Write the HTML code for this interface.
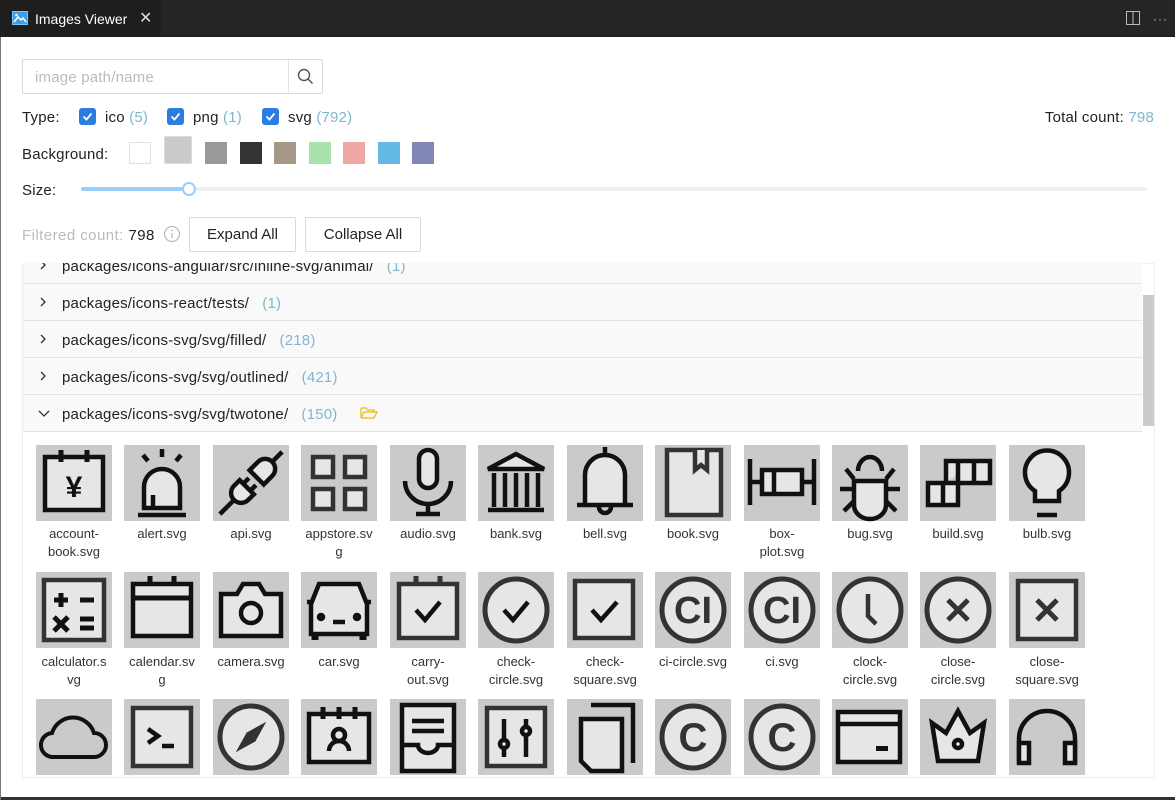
<!DOCTYPE html>
<html><head><meta charset="utf-8"><style>
*{box-sizing:border-box;margin:0;padding:0}
body{width:1175px;height:800px;overflow:hidden;background:#fff;font-family:"Liberation Sans",sans-serif;color:#222;position:relative}
.a{position:absolute}
.top{left:0;top:0;width:1175px;height:37px;background:#252526;border-bottom:1px solid #1a1a1a}
.tab{left:0;top:0;width:161px;height:37px;background:#1e1e1e;color:#fff;font-size:14px}
.t{font-size:15px;white-space:nowrap;letter-spacing:0.2px}
.cb{width:17px;height:17px;background:#2b7de1;border-radius:3px}
.blue{color:#7fb6d0}
.sw{width:22px;height:22px;top:142px}
.btn{border:1px solid #d9d9d9;border-radius:2px;height:35px;top:217px;font-size:15px;text-align:center;line-height:33px;background:#fff;z-index:5}
.row{left:23px;width:1119px;height:37px;background:#f9f9f9;border-bottom:1px solid #e3e3e3}
.row span.p{position:absolute;left:39px;top:11px;font-size:15px;letter-spacing:0.2px}
.chev{position:absolute;left:15px;top:13px}
.lbl{width:88px;font-size:13px;text-align:center;line-height:17.5px;color:#333;word-break:break-all}
svg{display:block}
</style></head><body>
<div class="a top"></div>
<div class="a tab">
<svg class="a" style="left:12px;top:11px" width="16" height="14" viewBox="0 0 16 14"><rect x="0.5" y="0.5" width="15" height="13" fill="#3a9fe8" stroke="#7cc4f5"/><path d="M2 11 L6 6 L9 9 L11 7 L14 11" stroke="#fff" stroke-width="1.5" fill="none"/><circle cx="4.5" cy="4" r="1.3" fill="#fff"/></svg>
<span class="a" style="left:35px;top:11px">Images Viewer</span>
<span class="a" style="left:139px;top:8px;font-size:16px;color:#ddd">✕</span>
</div>
<svg class="a" style="left:1126px;top:11px" width="14" height="14"><rect x="0.5" y="0.5" width="13" height="13" fill="none" stroke="#bbb"/><line x1="7" y1="0" x2="7" y2="14" stroke="#bbb"/></svg>
<div class="a" style="left:1153px;top:12px;color:#bbb;font-size:12px;letter-spacing:1px">···</div>
<div class="a" style="left:0;top:37px;width:1px;height:763px;background:#777;z-index:6"></div>
<div class="a" style="left:0;top:797px;width:1175px;height:3px;background:#333"></div>

<div class="a" style="left:22px;top:59px;width:301px;height:35px;border:1px solid #d9d9d9;border-radius:2px"></div>
<div class="a" style="left:288px;top:60px;width:1px;height:33px;background:#e3e3e3"></div>
<div class="a t" style="left:35px;top:69px;color:#bbb">image path/name</div>
<svg class="a" style="left:297px;top:68px" width="17" height="17"><circle cx="7" cy="7" r="5.5" fill="none" stroke="#555" stroke-width="1.4"/><line x1="11" y1="11" x2="15.5" y2="15.5" stroke="#555" stroke-width="1.5"/></svg>

<div class="a t" style="left:22px;top:109px">Type:</div>
<div class="a cb" style="left:79px;top:108px"></div><svg class="a" style="left:79px;top:108px" width="17" height="17"><path d="M4.5 8.5 L7.5 11.5 L12.5 5.5" stroke="#fff" stroke-width="1.8" fill="none"/></svg>
<div class="a t" style="left:105px;top:109px">ico <span class="blue">(5)</span></div>
<div class="a cb" style="left:167px;top:108px"></div><svg class="a" style="left:167px;top:108px" width="17" height="17"><path d="M4.5 8.5 L7.5 11.5 L12.5 5.5" stroke="#fff" stroke-width="1.8" fill="none"/></svg>
<div class="a t" style="left:193px;top:109px">png <span class="blue">(1)</span></div>
<div class="a cb" style="left:262px;top:108px"></div><svg class="a" style="left:262px;top:108px" width="17" height="17"><path d="M4.5 8.5 L7.5 11.5 L12.5 5.5" stroke="#fff" stroke-width="1.8" fill="none"/></svg>
<div class="a t" style="left:288px;top:109px">svg <span class="blue">(792)</span></div>
<div class="a t" style="right:21px;top:109px">Total count: <span class="blue">798</span></div>

<div class="a t" style="left:22px;top:146px">Background:</div>
<div class="a sw" style="left:129px;border:1px solid #e0e0e0;background:#fff"></div>
<div class="a" style="left:164px;top:136px;width:28px;height:28px;background:#cacaca;border:1px solid #ddd"></div>
<div class="a sw" style="left:205px;background:#999"></div>
<div class="a sw" style="left:240px;background:#333"></div>
<div class="a sw" style="left:274px;background:#a69887"></div>
<div class="a sw" style="left:309px;background:#a8e2ac"></div>
<div class="a sw" style="left:343px;background:#f0a6a2"></div>
<div class="a sw" style="left:378px;background:#62b9e1"></div>
<div class="a sw" style="left:412px;background:#8387b6"></div>

<div class="a t" style="left:22px;top:182px">Size:</div>
<div class="a" style="left:81px;top:187px;width:1066px;height:4px;background:#f0f0f0;border-radius:2px"></div>
<div class="a" style="left:81px;top:187px;width:108px;height:4px;background:#99cefa;border-radius:2px"></div>
<div class="a" style="left:182px;top:182px;width:14px;height:14px;border-radius:50%;background:#fff;border:2px solid #99cefa"></div>

<div class="a" style="left:22px;top:263px;width:1133px;height:515px;border:1px solid #eee;border-top:1px solid #f2f2f2"></div>
<div class="a" style="left:1143px;top:295px;width:11px;height:131px;background:#cbcbcb"></div>
<div class="a row" style="top:247px;height:37px"><svg class="chev" width="10" height="10"><path d="M3 1L7 5L3 9" fill="none" stroke="#333" stroke-width="1.3"/></svg><span class="p">packages/icons-angular/src/inline-svg/animal/ &nbsp; <span class="blue">(1)</span></span></div>
<div class="a" style="left:1px;top:244px;width:1174px;height:19px;background:#fff"></div>
<div class="a row" style="top:284px"><svg class="chev" width="10" height="10"><path d="M3 1L7 5L3 9" fill="none" stroke="#333" stroke-width="1.3"/></svg><span class="p">packages/icons-react/tests/ &nbsp; <span class="blue">(1)</span></span></div>
<div class="a row" style="top:321px"><svg class="chev" width="10" height="10"><path d="M3 1L7 5L3 9" fill="none" stroke="#333" stroke-width="1.3"/></svg><span class="p">packages/icons-svg/svg/filled/ &nbsp; <span class="blue">(218)</span></span></div>
<div class="a row" style="top:358px"><svg class="chev" width="10" height="10"><path d="M3 1L7 5L3 9" fill="none" stroke="#333" stroke-width="1.3"/></svg><span class="p">packages/icons-svg/svg/outlined/ &nbsp; <span class="blue">(421)</span></span></div>
<div class="a row" style="top:395px"><svg class="chev" width="12" height="10"><path d="M1 3L6 8L11 3" fill="none" stroke="#333" stroke-width="1.3"/></svg><span class="p">packages/icons-svg/svg/twotone/ &nbsp; <span class="blue">(150)</span></span>
<svg class="a" style="left:337px;top:11px" width="18" height="14"><path d="M1 2 H6 L8 4 H14 V6 M1 2 V12 L4 6 H17 L14 12 H1" fill="none" stroke="#f0c330" stroke-width="1.4"/></svg></div>

<div class="a t" style="left:22px;top:227px;color:#bbb;letter-spacing:0.45px;z-index:5">Filtered count: <span style="color:#222">798</span></div>
<svg class="a" style="left:163px;top:225px;z-index:5" width="18" height="18"><circle cx="9" cy="9" r="7.5" fill="none" stroke="#bbb" stroke-width="1.2"/><line x1="9" y1="8" x2="9" y2="13" stroke="#bbb" stroke-width="1.4"/><circle cx="9" cy="5.5" r="0.9" fill="#bbb"/></svg>
<div class="a btn" style="left:189px;width:107px">Expand All</div>
<div class="a btn" style="left:305px;width:116px">Collapse All</div>

<svg class="a" style="left:0;top:0" width="1175" height="800">
<defs>
<g id="T"><rect width="76" height="76" fill="#cacaca"/></g>
</defs>
<g fill="#e6e6e6" stroke="#111" stroke-width="4.5" stroke-linejoin="miter">
<g transform="translate(36,445)"><use href="#T" stroke="none"/><rect x="9" y="12" width="58" height="53"/><path d="M25 5V17M51 5V17" stroke-width="5"/><text x="38" y="52" font-size="30" font-weight="bold" fill="#111" stroke="none" text-anchor="middle" font-family="Liberation Sans">¥</text></g>
<g transform="translate(124,445)"><use href="#T" stroke="none"/><path d="M20 63V42a18 18 0 0 1 36 0V63Z"/><path d="M14 70H62M38 4V12M19 10L24 16M57 10L52 16M29 63V50" fill="none"/></g>
<g transform="translate(213,445)"><use href="#T" stroke="none"/><g transform="rotate(45 38 38)"><path d="M38 8V-6M38 60V82" fill="none"/><path d="M28 30V18a10 10 0 0 1 20 0V30Z"/><path d="M28 44H48V52a10 10 0 0 1-20 0Z"/><path d="M33 44V36M43 44V36" fill="none"/></g></g>
<g transform="translate(301,445)" stroke="#333"><use href="#T" stroke="none"/><rect x="12" y="12" width="20" height="20"/><rect x="44" y="12" width="20" height="20"/><rect x="12" y="44" width="20" height="20"/><rect x="44" y="44" width="20" height="20"/></g>
<g transform="translate(390,445)"><use href="#T" stroke="none"/><rect x="29" y="5" width="18" height="38" rx="9"/><path d="M15 36a23 23 0 0 0 46 0M38 59V68M26 69H50" fill="none"/></g>
<g transform="translate(478,445)"><use href="#T" stroke="none"/><path d="M10 24L38 9L66 24Z"/><path d="M16 28V62M27 28V62M38 28V62M49 28V62M60 28V62M10 65H66" fill="none"/></g>
<g transform="translate(567,445)"><use href="#T" stroke="none"/><path d="M18 60V30a20 20 0 0 1 40 0V60H10H66Z"/><path d="M38 2V10M32 62a6 6 0 0 0 12 0" fill="none"/></g>
<g transform="translate(655,445)" stroke="#333"><use href="#T" stroke="none"/><rect x="12" y="5" width="54" height="65"/><path d="M40 5V25L46 20L52 25V5" /></g>
<g transform="translate(744,445)"><use href="#T" stroke="none"/><path d="M6 14V60M70 14V60M6 37H18M58 37H70" fill="none"/><rect x="18" y="25" width="40" height="24"/><path d="M30 25V49" fill="none"/></g>
<g transform="translate(832,445)"><use href="#T" stroke="none"/><path d="M22 36V60a16 14 0 0 0 32 0V36Z"/><path d="M26 26a12 14 0 0 1 24 0M22 44H8M54 44H68M22 56L12 66M54 56L64 66M22 34L14 24M54 34L62 24" fill="none"/></g>
<g transform="translate(920,445)"><use href="#T" stroke="none"/><path d="M8 38H38V60H8ZM38 38V16H70V38H38V60M26 38V16H54M23 38V60M54 16V38"/></g>
<g transform="translate(1009,445)"><use href="#T" stroke="none"/><path d="M26 56V46a22 22 0 1 1 24 0V56Z"/><path d="M28 70H48" fill="none"/></g>
<g transform="translate(36,572)" stroke="#333"><use href="#T" stroke="none"/><rect x="8" y="8" width="60" height="60"/><path d="M18 28H32M25 21V35M44 28H58M18 45L32 59M32 45L18 59M44 47H58M44 56H58" fill="none" stroke="#111" stroke-width="5"/></g>
<g transform="translate(124,572)"><use href="#T" stroke="none"/><rect x="9" y="12" width="58" height="52"/><path d="M9 26H67M26 4V14M50 4V14" fill="none" stroke-width="5"/></g>
<g transform="translate(213,572)"><use href="#T" stroke="none"/><path d="M8 22H24L30 12H46L52 22H68V64H8Z"/><circle cx="38" cy="41" r="10"/></g>
<g transform="translate(301,572)"><use href="#T" stroke="none"/><path d="M10 32L18 12H58L66 32V62H10Z"/><path d="M6 30H12M64 30H70M32 50H44" fill="none"/><circle cx="20" cy="45" r="2"/><circle cx="56" cy="45" r="2"/><path d="M14 62V68M62 62V68" fill="none" stroke-width="7"/></g>
<g transform="translate(390,572)" stroke="#333"><use href="#T" stroke="none"/><rect x="9" y="12" width="58" height="54"/><path d="M26 4V14M50 4V14" stroke-width="5"/><path d="M26 38L35 48L50 30" fill="none" stroke="#111"/></g>
<g transform="translate(478,572)" stroke="#333"><use href="#T" stroke="none"/><circle cx="38" cy="38" r="31" stroke-width="5"/><path d="M26 38L35 48L50 30" fill="none" stroke="#111"/></g>
<g transform="translate(567,572)" stroke="#333"><use href="#T" stroke="none"/><rect x="8" y="9" width="58" height="57"/><path d="M25 38L34 48L50 30" fill="none" stroke="#111"/></g>
<g transform="translate(655,572)" stroke="#333"><use href="#T" stroke="none"/><circle cx="38" cy="38" r="31" stroke-width="5"/><text x="38" y="51" font-size="38" font-weight="bold" fill="#333" stroke="none" text-anchor="middle" font-family="Liberation Sans">CI</text></g>
<g transform="translate(744,572)" stroke="#333"><use href="#T" stroke="none"/><circle cx="38" cy="38" r="31" stroke-width="5"/><text x="38" y="51" font-size="38" font-weight="bold" fill="#333" stroke="none" text-anchor="middle" font-family="Liberation Sans">CI</text></g>
<g transform="translate(832,572)" stroke="#333"><use href="#T" stroke="none"/><circle cx="38" cy="38" r="31" stroke-width="5"/><path d="M36 22V44L44 52" fill="none"/></g>
<g transform="translate(920,572)" stroke="#333"><use href="#T" stroke="none"/><circle cx="38" cy="38" r="31" stroke-width="5"/><path d="M28 28L48 48M48 28L28 48" fill="none" stroke-width="5"/></g>
<g transform="translate(1009,572)" stroke="#333"><use href="#T" stroke="none"/><rect x="9" y="9" width="58" height="58"/><path d="M28 28L48 48M48 28L28 48" fill="none" stroke-width="5"/></g>
<g transform="translate(36,699)"><use href="#T" stroke="none"/><path d="M18 58a12 12 0 0 1-2-24a22 22 0 0 1 42 0a12 12 0 0 1 0 24Z" fill="none" stroke-width="4"/></g>
<g transform="translate(124,699)" stroke="#333"><use href="#T" stroke="none"/><rect x="9" y="9" width="58" height="58"/><path d="M24 30L34 37L24 44M38 47H50" fill="none" stroke="#111"/></g>
<g transform="translate(213,699)" stroke="#333"><use href="#T" stroke="none"/><circle cx="38" cy="38" r="31" stroke-width="5"/><path d="M52 24L42 42L34 34ZM24 52L34 34L42 42Z" fill="#333" stroke-width="1"/></g>
<g transform="translate(301,699)"><use href="#T" stroke="none"/><rect x="8" y="15" width="60" height="48"/><path d="M22 8V20M38 8V20M54 8V20" stroke-width="5"/><circle cx="38" cy="36" r="6"/><path d="M28 52a10 10 0 0 1 20 0" fill="none"/></g>
<g transform="translate(390,699)"><use href="#T" stroke="none"/><rect x="12" y="6" width="52" height="66"/><path d="M22 22H54M22 32H54M12 46H28a10 8 0 0 0 20 0H64" fill="none"/></g>
<g transform="translate(478,699)" stroke="#333"><use href="#T" stroke="none"/><rect x="9" y="9" width="58" height="58"/><path d="M26 20V58M48 20V58" fill="none" stroke="#111"/><circle cx="26" cy="45" r="4" stroke="#111"/><circle cx="48" cy="32" r="4" stroke="#111"/></g>
<g transform="translate(567,699)"><use href="#T" stroke="none"/><path d="M24 6H66V64" fill="none"/><path d="M14 20H55V72H24L14 62Z"/></g>
<g transform="translate(655,699)" stroke="#333"><use href="#T" stroke="none"/><circle cx="38" cy="38" r="31" stroke-width="5"/><text x="38" y="52" font-size="40" font-weight="bold" fill="#333" stroke="none" text-anchor="middle" font-family="Liberation Sans">C</text></g>
<g transform="translate(744,699)" stroke="#333"><use href="#T" stroke="none"/><circle cx="38" cy="38" r="31" stroke-width="5"/><text x="38" y="52" font-size="40" font-weight="bold" fill="#333" stroke="none" text-anchor="middle" font-family="Liberation Sans">C</text></g>
<g transform="translate(832,699)"><use href="#T" stroke="none"/><rect x="6" y="13" width="62" height="50"/><path d="M6 25H68" fill="none"/><rect x="44" y="47" width="12" height="5" fill="#111" stroke="none"/></g>
<g transform="translate(920,699)"><use href="#T" stroke="none"/><path d="M12 24L26 34L38 12L50 34L64 24L58 62H18Z"/><circle cx="38" cy="45" r="4"/></g>
<g transform="translate(1009,699)"><use href="#T" stroke="none"/><path d="M10 64V40a28 28 0 0 1 56 0V64" fill="none"/><rect x="10" y="44" width="10" height="20"/><rect x="56" y="44" width="10" height="20"/></g>
</g>
</svg>

<div class="a lbl" style="left:30px;top:525px">account-<br>book.svg</div>
<div class="a lbl" style="left:118px;top:525px">alert.svg</div>
<div class="a lbl" style="left:207px;top:525px">api.svg</div>
<div class="a lbl" style="left:295px;top:525px">appstore.sv<br>g</div>
<div class="a lbl" style="left:384px;top:525px">audio.svg</div>
<div class="a lbl" style="left:472px;top:525px">bank.svg</div>
<div class="a lbl" style="left:561px;top:525px">bell.svg</div>
<div class="a lbl" style="left:649px;top:525px">book.svg</div>
<div class="a lbl" style="left:738px;top:525px">box-<br>plot.svg</div>
<div class="a lbl" style="left:826px;top:525px">bug.svg</div>
<div class="a lbl" style="left:914px;top:525px">build.svg</div>
<div class="a lbl" style="left:1003px;top:525px">bulb.svg</div>
<div class="a lbl" style="left:30px;top:653px">calculator.s<br>vg</div>
<div class="a lbl" style="left:118px;top:653px">calendar.sv<br>g</div>
<div class="a lbl" style="left:207px;top:653px">camera.svg</div>
<div class="a lbl" style="left:295px;top:653px">car.svg</div>
<div class="a lbl" style="left:384px;top:653px">carry-<br>out.svg</div>
<div class="a lbl" style="left:472px;top:653px">check-<br>circle.svg</div>
<div class="a lbl" style="left:561px;top:653px">check-<br>square.svg</div>
<div class="a lbl" style="left:649px;top:653px">ci-circle.svg</div>
<div class="a lbl" style="left:738px;top:653px">ci.svg</div>
<div class="a lbl" style="left:826px;top:653px">clock-<br>circle.svg</div>
<div class="a lbl" style="left:914px;top:653px">close-<br>circle.svg</div>
<div class="a lbl" style="left:1003px;top:653px">close-<br>square.svg</div>
</body></html>
